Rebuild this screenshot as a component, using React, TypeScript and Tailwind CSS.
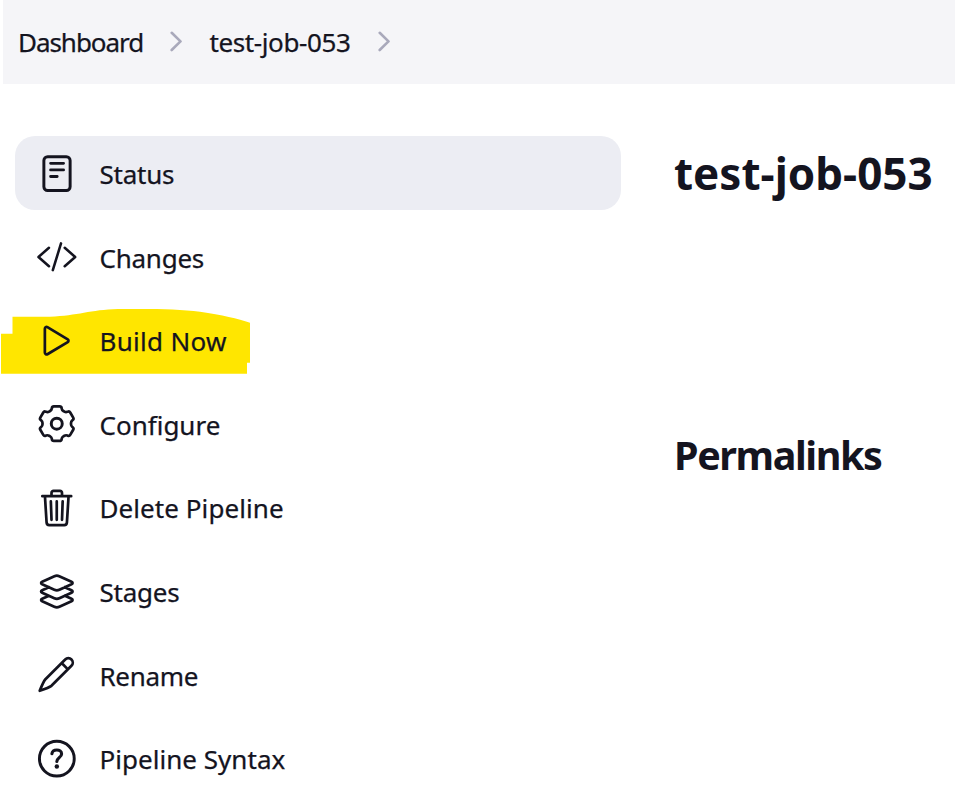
import React from "react";

const Ion = ({ children }: { children: React.ReactNode }) => (
  <svg viewBox="0 0 512 512" className="mt-px h-[42px] w-[42px] shrink-0" fill="none" stroke="currentColor" strokeWidth="33" strokeLinecap="round" strokeLinejoin="round">
    {children}
  </svg>
);

// Six-toothed cog outline with softened corners
const gearPath = (() => {
  const pts: [number, number][] = [];
  for (let k = 0; k < 6; k++) {
    for (const [offset, r] of [[-15, 218], [15, 218], [21, 176], [39, 176]]) {
      const a = ((k * 60 + offset) * Math.PI) / 180;
      pts.push([253 + r * Math.sin(a), 252 - r * Math.cos(a)]);
    }
  }
  const n = pts.length;
  const toward = (p: [number, number], q: [number, number]) => {
    const d = Math.hypot(q[0] - p[0], q[1] - p[1]);
    const t = Math.min(20 / d, 0.5);
    return `${(p[0] + (q[0] - p[0]) * t).toFixed(1)} ${(p[1] + (q[1] - p[1]) * t).toFixed(1)}`;
  };
  return (
    pts
      .map((p, i) => {
        const prev = pts[(i + n - 1) % n];
        const next = pts[(i + 1) % n];
        return `${i ? "L" : "M"}${toward(p, prev)}Q${p[0].toFixed(1)} ${p[1].toFixed(1)} ${toward(p, next)}`;
      })
      .join("") + "Z"
  );
})();

const items = [
  { label: "Status", text: "tracking-[-0.25px] mt-[2px]", icon: <><rect x="96" y="46" width="320" height="412" rx="46" strokeWidth="36" /><path d="M178 126h158M178 206h158M178 286h80" strokeWidth="35" /></> },
  { label: "Changes", text: "tracking-[-0.25px] mt-[3px]", icon: <path d="M158 368L30 256l128-112M350 368l128-112-128-112M305 90l-100 326" strokeWidth="31" /> },
  { label: "Build Now", text: "tracking-[0.3px] mt-[2px]", icon: <path d="M108 107v290c0 17.44 17 28.52 31 20.16l247.9-148.37c12.12-7.25 12.12-26.33 0-33.58L139 86.84c-14-8.36-31 2.72-31 20.16z" /> },
  { label: "Configure", text: "mt-[3px]", icon: <><path d={gearPath} /><circle cx="253" cy="252" r="67" strokeWidth="36" /></> },
  { label: "Delete Pipeline", text: "tracking-[0.07px] mt-[2px]", icon: <path transform="translate(-3 0)" d="M112 112l20 320c.95 18.49 14.4 32 32 32h184c17.67 0 30.87-13.51 32-32l20-320M80 112h352M192 112V72a23.93 23.93 0 0124-24h80a23.93 23.93 0 0124 24v40M256 176v224M184 176l8 224M328 176l-8 224" /> },
  { label: "Stages", text: "tracking-[-0.25px] mt-[3px]", icon: <path transform="translate(-2 6)" d="M434.8 137.65l-149.36-68.1c-16.19-7.4-42.69-7.4-58.88 0L77.3 137.65c-17.6 8-17.6 21.09 0 29.09l148 67.5c16.89 7.7 44.69 7.7 61.58 0l148-67.5c17.52-8 17.52-21.1-.08-29.09zM160 308.52l-82.7 37.11c-17.6 8-17.6 21.1 0 29.1l148 67.5c16.89 7.69 44.69 7.69 61.58 0l148-67.5c17.6-8 17.6-21.1 0-29.1l-79.94-38.47M160 204.48l-82.8 37.16c-17.6 8-17.6 21.1 0 29.1l148 67.49c16.89 7.7 44.69 7.7 61.58 0l148-67.49c17.7-8 17.7-21.1.1-29.1L352 204.48" /> },
  { label: "Rename", text: "tracking-[-0.3px] mt-[3px]", icon: <path transform="translate(-10 2)" d="M366 65L122 309Q103 330 55 447Q171 406 198 386L442 142A54 54 0 0 0 366 65ZM323 108L399 185" /> },
  { label: "Pipeline Syntax", text: "tracking-[0.03px] mt-[2px]", icon: <><circle cx="254" cy="252" r="212" strokeWidth="36" /><path d="M194 192C198 160 226 146 254 146C286 146 312 164 312 194C312 236 254 244 254 286" strokeWidth="38" /><circle cx="254" cy="347" r="27" fill="currentColor" stroke="none" /></> },
];

const Chevron = () => (
  <svg viewBox="0 0 14 22" className="h-[22px] w-[14px] shrink-0" fill="none" stroke="#a9a9bb" strokeWidth="2.6" strokeLinecap="round" strokeLinejoin="round">
    <path d="M2.7 1.8L11.5 10.4L2.7 19" />
  </svg>
);

export default function App() {
  return (
    <div className="h-[802px] w-[955px] overflow-hidden bg-white font-['Noto_Sans',sans-serif] text-[26px] text-[#14141f]">
      <header className="ml-[3px] flex h-[84px] items-center bg-[#f5f5f8] pl-[15px] [-webkit-text-stroke:0.25px_#14141f]">
        <span className="w-[151px] whitespace-nowrap tracking-[-1.05px]">Dashboard</span>
        <Chevron />
        <span className="ml-[26.5px] w-[167.5px] whitespace-nowrap tracking-[-0.4px]">test-job-053</span>
        <Chevron />
      </header>
      <div className="flex">
        <nav className="ml-[15px] mt-[52px] flex w-[606px] flex-col gap-[9.6px]">
          {items.map((it, i) => (
            <a key={it.label} className={`relative flex h-[74px] items-center rounded-[20px] pl-[20.5px] ${i === 0 ? "bg-[#ecedf3]" : ""}`}>
              {it.label === "Build Now" && (
                <svg viewBox="0 303.2 252 74" className="absolute -left-[15px] top-0 h-[74px] w-[252px]" fill="#ffe600">
                  <path d="M1 334H12.5V317H50C78 316 90 310 118 309.3C150 309 178 309 200 312C222 315 238 319 250 323V363H247V374H1Z" />
                </svg>
              )}
              <span className="relative flex items-center">
                <Ion>{it.icon}</Ion>
                <span className={`ml-[22px] whitespace-nowrap [-webkit-text-stroke:0.25px_#14141f] ${it.text}`}>{it.label}</span>
              </span>
            </a>
          ))}
        </nav>
        <main className="ml-[53px] pt-[52px]">
          <h1 className="flex h-[74px] items-center whitespace-nowrap text-[44px] font-bold">test-job-053</h1>
          <h2 className="mt-[209px] flex h-[74px] items-center text-[39.5px] font-bold tracking-[-1.4px]">Permalinks</h2>
        </main>
      </div>
    </div>
  );
}
